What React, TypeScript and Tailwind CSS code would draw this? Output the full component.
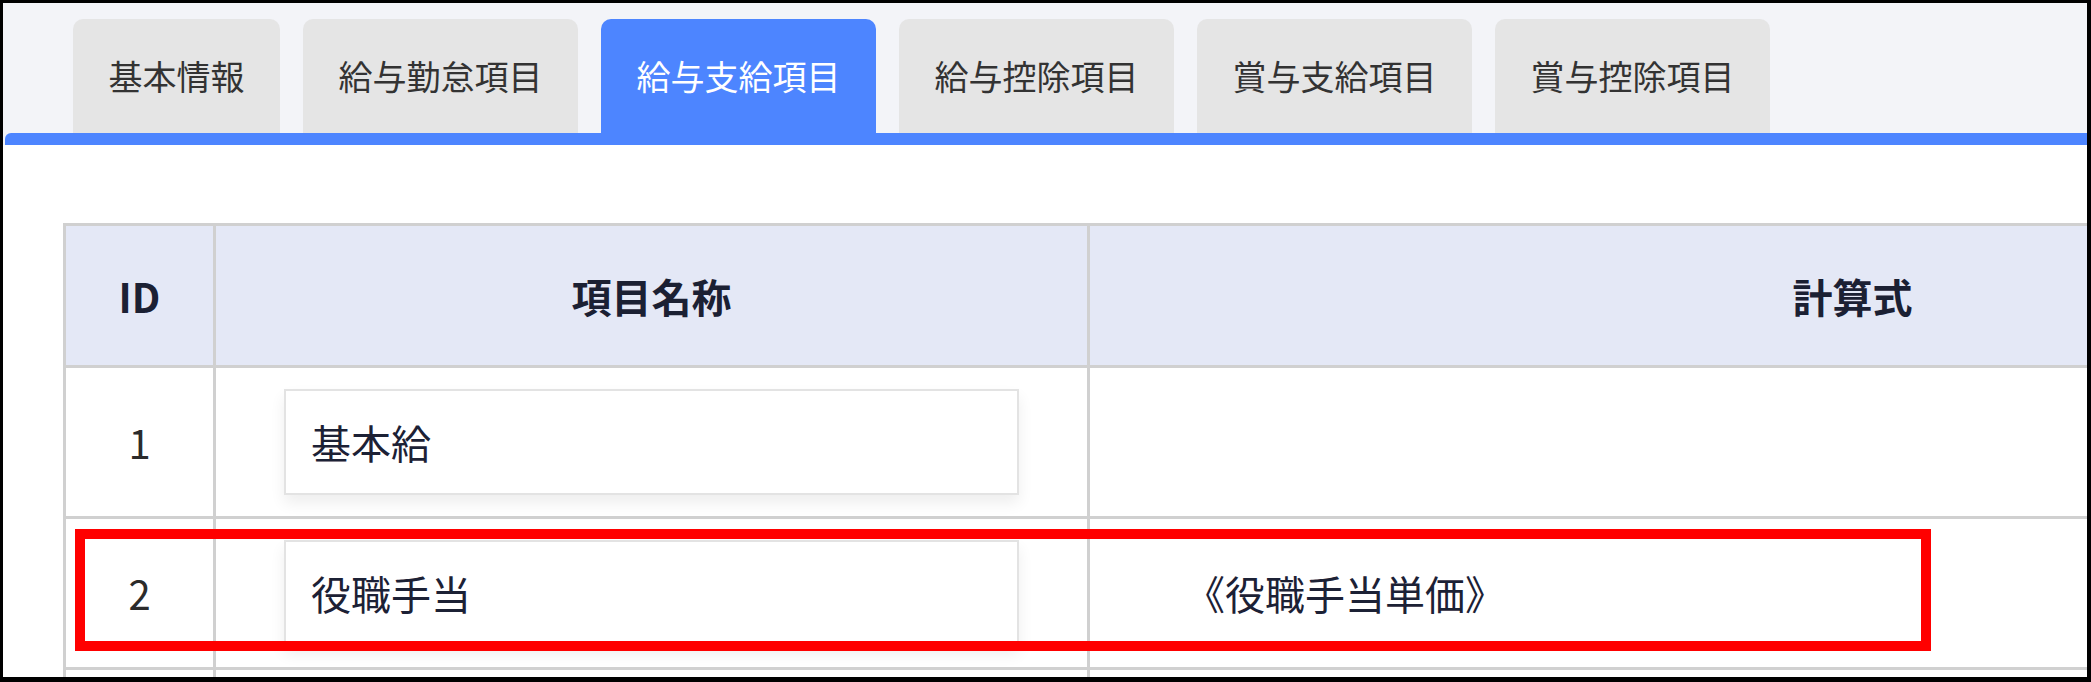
import React from "react";

const tabs = ["基本情報", "給与勤怠項目", "給与支給項目", "給与控除項目", "賞与支給項目", "賞与控除項目"];
const activeTab = 2;

const rows = [
  { id: "1", name: "基本給", formula: "" },
  { id: "2", name: "役職手当", formula: "《役職手当単価》" },
];

const font = { fontFamily: '"Noto Sans CJK JP", "Noto Sans", sans-serif' };

function ItemInput({ value }: { value: string }) {
  return (
    <div className="h-[106px] w-full border-2 border-[#e3e3e3] bg-white flex items-center pl-[25px] text-[40px] text-[#1c2135] shadow-[0_8px_14px_rgba(0,0,0,0.07)]">
      {value}
    </div>
  );
}

export default function App() {
  return (
    <div
      className="relative w-[2091px] h-[682px] overflow-hidden bg-[#f3f4f8] border-black border-t-[3px] border-l-[3px] border-r-[4px] border-b-[5px] flex flex-col"
      style={font}
    >
      {/* Tab bar */}
      <div className="flex flex-row gap-[23px] pl-[70px] pt-[16px] h-[130px] shrink-0">
        {tabs.map((label, i) => (
          <div
            key={label}
            className={`h-[114px] px-[35.5px] flex items-center rounded-t-[10px] text-[34px] leading-none ${
              i === activeTab ? "bg-[#4d85ff] text-white" : "bg-[#e5e5e5] text-[#333333]"
            }`}
          >
            {label}
          </div>
        ))}
      </div>
      <div className="ml-[2px] h-[12px] bg-[#4d85ff] rounded-tl-[6px] shrink-0" />

      {/* Panel */}
      <div className="flex-1 bg-white pl-[60px] pt-[78px] overflow-hidden">
        <table className="table-fixed border-collapse w-[2552px]">
          <colgroup>
            <col className="w-[150px]" />
            <col className="w-[874px]" />
            <col className="w-[1528px]" />
          </colgroup>
          <thead>
            <tr className="h-[142px] bg-[#e4e8f6]">
              <th className="border-[3px] border-[#d0d0d0] text-center text-[40px] font-bold text-[#1b2033]">ID</th>
              <th className="border-[3px] border-[#d0d0d0] text-center text-[40px] font-bold text-[#1b2033]">項目名称</th>
              <th className="border-[3px] border-[#d0d0d0] text-center text-[40px] font-bold text-[#1b2033]">計算式</th>
            </tr>
          </thead>
          <tbody>
            {rows.map((r) => (
              <tr key={r.id} className="h-[151px]">
                <td className="border-[3px] border-[#d0d0d0] text-center text-[40px] text-[#2b2b2b]">{r.id}</td>
                <td className="border-[3px] border-[#d0d0d0] px-[68px] py-[20px]">
                  <ItemInput value={r.name} />
                </td>
                <td className="border-[3px] border-[#d0d0d0] pl-[95px] text-[40px] text-[#1c2135]">{r.formula}</td>
              </tr>
            ))}
            <tr className="h-[151px]">
              <td className="border-[3px] border-[#d0d0d0]" />
              <td className="border-[3px] border-[#d0d0d0]" />
              <td className="border-[3px] border-[#d0d0d0]" />
            </tr>
          </tbody>
        </table>
      </div>

      {/* Highlight around row 2 */}
      <div className="absolute left-[72px] top-[526px] w-[1856px] h-[122px] border-[10px] border-[#ff0000] pointer-events-none" />
    </div>
  );
}
